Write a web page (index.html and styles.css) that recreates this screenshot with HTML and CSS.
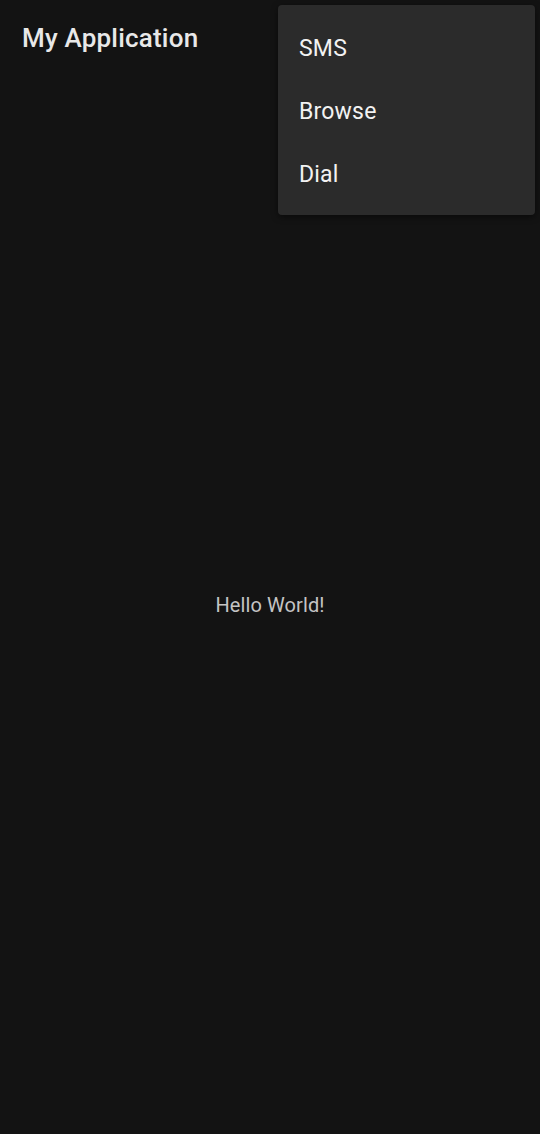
FILE: index.html
```html
<!DOCTYPE html>
<html>
<head>
<meta charset="utf-8">
<link rel="stylesheet" href="styles.css">
</head>
<body>
<div class="screen">
  <header class="appbar">
    <h1 class="title">My Application</h1>
  </header>
  <main class="content">
    <p class="hello">Hello World!</p>
  </main>
  <ul class="menu">
    <li class="menu-item">SMS</li>
    <li class="menu-item">Browse</li>
    <li class="menu-item">Dial</li>
  </ul>
</div>
</body>
</html>
```
FILE: styles.css
```css
html, body {
  margin: 0;
  padding: 0;
  background: #131313;
}
.screen {
  position: relative;
  width: 540px;
  height: 1134px;
  display: flex;
  flex-direction: column;
  font-family: Roboto, "Noto Sans", sans-serif;
}
.appbar {
  height: 76px;
  display: flex;
  align-items: center;
  padding-left: 22px;
  flex: none;
}
.title {
  margin: 0;
  font-size: 26px;
  letter-spacing: 0.2px;
  font-weight: 500;
  color: #e8e8e8;
}
.content {
  flex: 1;
  display: flex;
  align-items: center;
  justify-content: center;
}
.hello {
  margin: 0;
  font-size: 20px;
  letter-spacing: 0.1px;
  color: #c4c4c4;
}
.menu {
  position: absolute;
  top: 5px;
  left: 278px;
  width: 257px;
  margin: 0;
  padding: 12px 0 9px;
  list-style: none;
  background: #2b2b2b;
  border-radius: 4px;
  box-shadow: 0 2px 6px rgba(0,0,0,0.5);
}
.menu-item {
  height: 63px;
  display: flex;
  align-items: center;
  padding-left: 21px;
  font-size: 23px;
  letter-spacing: 0.2px;
  color: #f2f2f2;
}
```
